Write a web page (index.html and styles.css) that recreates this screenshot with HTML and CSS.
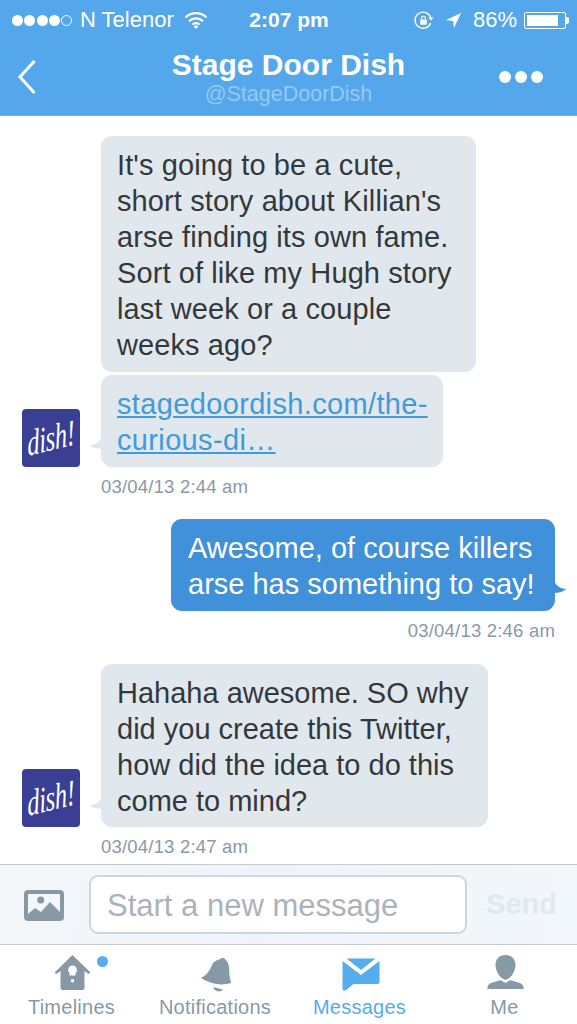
FILE: index.html
```html
<!DOCTYPE html>
<html lang="en">
<head>
  <meta charset="UTF-8">
  <meta name="viewport" content="width=device-width, initial-scale=1.0">
  <title>Stage Door Dish</title>
  <link rel="stylesheet" href="styles.css">
</head>
<body>
  <header class="top">
    <div class="status">
      <div class="status-left">
        <span class="signal"><i></i><i></i><i></i><i></i><i class="off"></i></span>
        <span>N Telenor</span>
        <svg class="wifi" width="24" height="18" viewBox="0 0 24 18">
          <path d="M1.500 6.500a15 15 0 0 1 21 0M5 10.200a10 10 0 0 1 14 0M8.400 13.600a5 5 0 0 1 7.200 0" fill="none" stroke="#fff" stroke-width="2.200"/>
          <path d="M12 18l-2.400-2.600a3.400 3.400 0 0 1 4.800 0z" fill="#fff"/>
        </svg>
      </div>
      <div class="status-time">2:07 pm</div>
      <div class="status-right">
        <svg class="lock" width="21" height="21" viewBox="0 0 22 22">
          <path d="M18.500 13.500a8.400 8.400 0 1 1 .2-5" fill="none" stroke="#fff" stroke-width="1.500"/>
          <path d="M21.500 7.500l-2.600 3.400-3-3z" fill="#fff"/>
          <rect x="7.500" y="10" width="7" height="5.500" rx="1" fill="#fff"/>
          <path d="M9 10V8.500a2 2 0 0 1 4 0V10" fill="none" stroke="#fff" stroke-width="1.200"/>
        </svg>
        <svg class="arrow" width="17" height="17" viewBox="0 0 18 18"><path d="M17 1L1 8.600l7.600.8.900 7.600z" fill="#fff"/></svg>
        <span class="pct">86%</span>
        <span class="battery"><span class="battery-fill"></span></span>
      </div>
    </div>
    <div class="nav">
      <svg class="back" width="20" height="36" viewBox="0 0 20 36"><path d="M17.500 2L3 18l14.500 16" fill="none" stroke="#fff" stroke-width="3"/></svg>
      <div class="nav-title">
        <h1>Stage Door Dish</h1>
        <p>@StageDoorDish</p>
      </div>
      <div class="more"><i></i><i></i><i></i></div>
    </div>
  </header>

  <main class="thread">
    <div class="group">
      <div class="row">
        <div class="bubble b-story">It's going to be a cute,<br>short story about Killian's<br>arse finding its own fame.<br>Sort of like my Hugh story<br>last week or a couple<br>weeks ago?</div>
      </div>
      <div class="row">
        <div class="avatar"><span>dish!</span></div>
        <div class="bubble tail b-link"><a href="#">stagedoordish.com/the-<br>curious-di…</a></div>
      </div>
      <div class="time">03/04/13 2:44 am</div>
    </div>

    <div class="group mine">
      <div class="bubble blue">Awesome, of course killers<br>arse has something to say!</div>
      <div class="time">03/04/13 2:46 am</div>
    </div>

    <div class="group">
      <div class="row">
        <div class="avatar"><span>dish!</span></div>
        <div class="bubble tail b-reply">Hahaha awesome. SO why<br>did you create this Twitter,<br>how did the idea to do this<br>come to mind?</div>
      </div>
      <div class="time">03/04/13 2:47 am</div>
    </div>
  </main>

  <div class="compose">
    <svg class="photo" width="40" height="31" viewBox="0 0 40 31">
      <rect width="40" height="31" rx="4" fill="#8899a6"/>
      <rect x="4" y="4" width="32" height="23" fill="#f5f8fa"/>
      <circle cx="16.700" cy="10" r="3.500" fill="#8899a6"/>
      <path d="M4 24l7-6 6 4 9-10 10 10v5H4z" fill="#8899a6"/>
    </svg>
    <div class="field">Start a new message</div>
    <div class="send">Send</div>
  </div>

  <nav class="tabs">
    <div class="tab">
      <span class="badge"></span>
      <svg width="36" height="40" viewBox="0 0 36 40">
        <path d="M18.500 0L.500 17.500l2 1.500 4-3v17a2 2 0 0 0 2 2h20a2 2 0 0 0 2-2V16l4 3 2-1.500z" fill="#8899a6"/>
        <path d="M18.500 10.500a4.500 4.500 0 0 1 3 7.800v2.200h-6v-2.200a4.500 4.500 0 0 1 3-7.800z" fill="#fff"/>
        <circle cx="18.500" cy="25.800" r="1.700" fill="#fff"/>
      </svg>
      <span>Timelines</span>
    </div>
    <div class="tab">
      <svg width="36" height="40" viewBox="0 0 36 40">
        <path d="M4 23C10 20 13 15 15 10C17 6 20 5 22.500 4.500C23 2.500 28 2 28.500 5C33 8 32 16 32.500 20C33 24 34 26 34 28C25 31 13 29 4 23Z" fill="#8899a6"/>
        <path d="M16 32l10 2.500c-2 3-8 3-10-2.500z" fill="#8899a6"/>
      </svg>
      <span>Notifications</span>
    </div>
    <div class="tab active">
      <svg width="36" height="40" viewBox="0 0 36 40">
        <path d="M.500 6L19 20 37.500 6v21a2 2 0 0 1-2 2H11.500L3.500 35.500H2A1.500 1.500 0 0 1 .500 34z" fill="#55acee"/>
        <path d="M4.500 3.500h29L19 15z" fill="#55acee"/>
      </svg>
      <span>Messages</span>
    </div>
    <div class="tab">
      <svg width="36" height="40" viewBox="0 0 36 40">
        <path d="M18.500 0C24.500 0 28.500 4 28.500 10C28.500 15 25.500 20 22.500 23L18.500 25L14.500 23C11.500 20 8.500 15 8.500 10C8.500 4 12.500 0 18.500 0Z" fill="#8899a6"/>
        <path d="M13.500 25L18.500 28L23.500 25C27.500 27 35.500 27 36.500 32V34H.500V32C1.500 27 9.500 27 13.500 25Z" fill="#8899a6"/>
      </svg>
      <span>Me</span>
    </div>
  </nav>
</body>
</html>
```

FILE: styles.css
```css
* {
  box-sizing: border-box;
}
body {
  margin: 0;
  height: 1024px;
  overflow: hidden;
  display: flex;
  flex-direction: column;
  font-family: 'Liberation Sans', Arial, sans-serif;
  background: #fff;
  color: #33383c;
}

/* top bar */
.top {
  height: 116px;
  flex: none;
  background: #54a7ea;
  color: #fff;
  border-bottom: 1px solid #6cb4ec;
}
.status {
  height: 38px;
  display: grid;
  grid-template-columns: 1fr auto 1fr;
  align-items: center;
  padding: 2px 11px 0 12px;
  font-size: 22px;
}
.status-left, .status-right {
  display: flex;
  align-items: center;
}
.status-left {
  gap: 8px;
}
.status-right {
  justify-content: flex-end;
  gap: 11px;
}
.status-time {
  font-weight: bold;
  font-size: 21px;
}
.signal {
  display: flex;
  gap: 1.250px;
}
.signal i {
  width: 11px;
  height: 11px;
  border-radius: 50%;
  background: #fff;
}
.signal .off {
  background: none;
  border: 1px solid #fff;
}
.wifi {
  margin-left: 2px;
}
.battery {
  width: 42px;
  height: 17px;
  border: 1px solid #fff;
  padding: 2px;
  margin-left: -4px;
  border-radius: 2px;
  position: relative;
}
.battery::after {
  content: '';
  position: absolute;
  right: -4px;
  top: 4px;
  width: 3px;
  height: 7px;
  background: #fff;
  border-radius: 0 2px 2px 0;
}
.battery-fill {
  display: block;
  width: 86%;
  height: 100%;
  background: #fff;
}
.nav {
  height: 77px;
  display: grid;
  grid-template-columns: 1fr auto 1fr;
  align-items: center;
  padding: 0 34px 0 17px;
  margin-right: -17px;
}
.nav-title {
  text-align: center;
}
.nav-title h1 {
  margin: 0;
  font-size: 30px;
  line-height: 34px;
  font-weight: bold;
}
.nav-title p {
  margin: 0;
  font-size: 21.500px;
  line-height: 24px;
  color: #96c9f2;
}
.more {
  display: flex;
  justify-content: flex-end;
  gap: 4px;
  margin-right: 17px;
  margin-top: 1px;
}
.more i {
  width: 12px;
  height: 12px;
  border-radius: 50%;
  background: #fff;
}

/* messages */
.thread {
  flex: 1;
  min-height: 0;
  overflow: hidden;
  padding: 20px 22px 0;
  display: flex;
  flex-direction: column;
  gap: 21px;
}
.group {
  display: flex;
  flex-direction: column;
  gap: 3px;
}
.row {
  display: flex;
  align-items: flex-end;
  padding-left: 79px;
}
.row:has(.avatar) {
  padding-left: 0;
  gap: 21px;
}
.avatar {
  width: 58px;
  height: 58px;
  flex: none;
  border-radius: 4px;
  background: #3b3f94;
  color: #fff;
  display: flex;
  align-items: center;
  justify-content: center;
  overflow: hidden;
}
.avatar span {
  font-family: 'Liberation Serif', serif;
  font-style: italic;
  font-size: 36px;
  line-height: 1;
  letter-spacing: -.5px;
  transform: rotate(-14deg) skewX(-10deg) scaleX(.7);
}
.bubble {
  position: relative;
  background: #e1e8ed;
  border-radius: 11px;
  padding: 11px 16px 9px;
  font-size: 29px;
  line-height: 36px;
  letter-spacing: .1px;
  color: #33383c;
}
.b-story {
  width: 375px;
}
.b-link {
  width: 342px;
  letter-spacing: .35px;
}
.b-reply {
  width: 387px;
  padding-bottom: 8px;
  letter-spacing: 0;
}
.bubble a {
  color: #3f9bd9;
}
.tail::before {
  content: '';
  position: absolute;
  left: -11px;
  bottom: 18px;
  width: 12px;
  height: 12px;
  background: #e1e8ed;
  clip-path: path('M12 0C10 4 6 8 0 8C3 11 8 12 12 12Z');
}
.time {
  font-size: 18.500px;
  line-height: 22px;
  letter-spacing: .2px;
  color: #8899a6;
  margin-top: 6px;
  padding-left: 79px;
}
.mine {
  align-items: flex-end;
  margin-bottom: 1px;
}
.mine .time {
  padding: 0;
}
.blue {
  width: 384px;
  padding-left: 17px;
  letter-spacing: 0;
  background: #4190da;
  color: #fff;
}
.blue::after {
  content: '';
  position: absolute;
  right: -11px;
  bottom: 18px;
  width: 12px;
  height: 12px;
  background: #4190da;
  clip-path: path('M0 0C2 4 6 8 12 8C9 11 4 12 0 12Z');
}

/* compose bar */
.compose {
  height: 81px;
  flex: none;
  display: flex;
  align-items: center;
  background: linear-gradient(100deg, #f5f8fa 0%, #eef4fa 45%, #f3f7fb 100%);
  border-top: 1px solid #c5c9cd;
  border-bottom: 1px solid #c5c9cd;
  padding: 0 20px 0 24px;
}
.photo {
  flex: none;
  margin-top: 2px;
}
.field {
  width: 378px;
  height: 59px;
  margin-left: 25px;
  background: #fff;
  border: 2px solid #ccd6dd;
  border-radius: 9px;
  padding: 0 16px;
  font-size: 31px;
  line-height: 57px;
  color: #aab3ba;
  white-space: nowrap;
}
.send {
  margin-left: auto;
  font-size: 29px;
  font-weight: bold;
  color: #e2e9ee;
}

/* tab bar */
.tabs {
  height: 79px;
  flex: none;
  display: grid;
  grid-template-columns: 143px 144px 145px 145px;
  background: #fff;
}
.tab {
  position: relative;
  display: flex;
  flex-direction: column;
  align-items: center;
  padding-top: 10px;
  font-size: 20px;
  line-height: 24px;
  letter-spacing: .25px;
  color: #8899a6;
  overflow: visible;
}
.tab svg {
  overflow: visible;
}
.tab.active {
  color: #55acee;
}
.badge {
  position: absolute;
  top: 11px;
  left: 97px;
  width: 11px;
  height: 11px;
  border-radius: 50%;
  background: #55acee;
}
```
